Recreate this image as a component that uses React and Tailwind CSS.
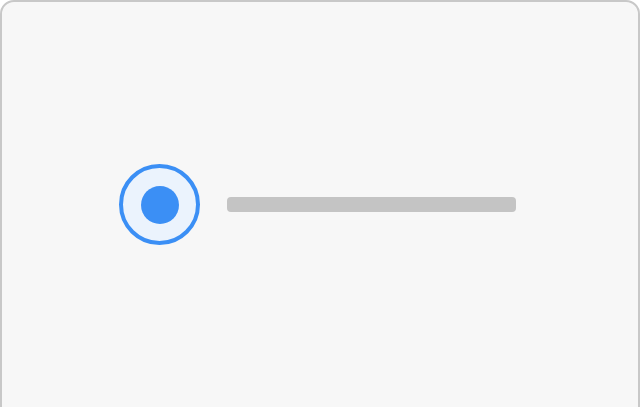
import React from "react";

export default function App() {
  return (
    <div className="w-[640px] h-[407px] overflow-hidden bg-white">
      <div className="h-[440px] rounded-[14px] border-2 border-[#c8c8c8] bg-[#f7f7f7] pt-[162px] pl-[117px]">
        <div className="flex items-center gap-[27px]">
          <div className="w-[81px] h-[81px] rounded-full border-[4px] border-[#3b8ff5] bg-[#ebf3fd] flex items-center justify-center">
            <div className="w-[38px] h-[38px] rounded-full bg-[#3b8ff5]" />
          </div>
          <div className="w-[289px] h-[15px] rounded-[4px] bg-[#c4c4c4]" />
        </div>
      </div>
    </div>
  );
}
